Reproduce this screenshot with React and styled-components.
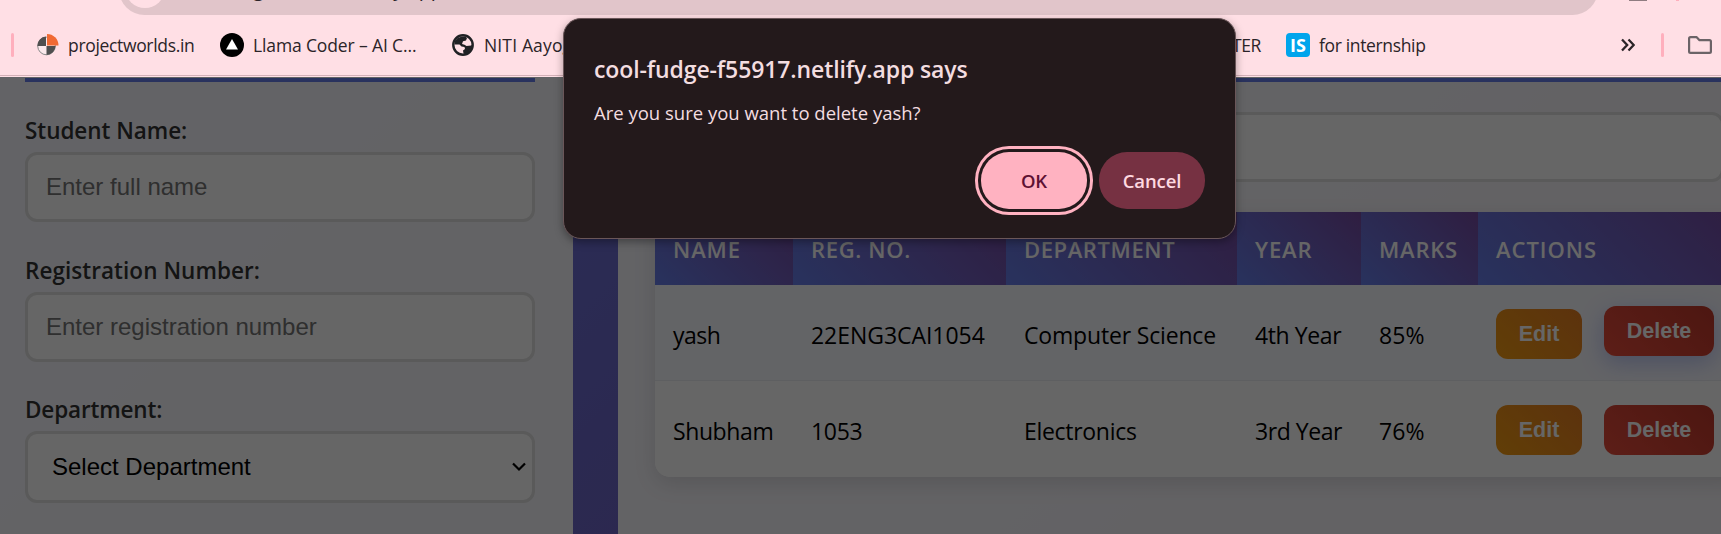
import React from "react";
import styled, { createGlobalStyle } from "styled-components";

const ui = `"Open Sans", "Noto Sans", sans-serif`;
const arial = `"Liberation Sans", Arial, sans-serif`;
const brand = "linear-gradient(45deg, #667eea, #764ba2)";

const Global = createGlobalStyle`
  *, *::before, *::after { box-sizing: border-box; }
  body { margin: 0; overflow: hidden; font-family: ${ui}; }
`;

const Screen = styled.div`
  position: relative;
  display: flex;
  flex-direction: column;
  width: 1721px;
  height: 534px;
  overflow: hidden;
`;

const Chrome = styled.header`
  display: flex;
  flex-direction: column;
  flex: none;
  height: 77px;
  background: #ffdfe5;
  border-bottom: 1px solid #ffdfe5;
  box-shadow: inset 0 -1px 0 #d3b1b8;
`;

const AddressRow = styled.div`
  display: flex;
  align-items: flex-end;
  height: 15px;
  padding-left: 119px;
  overflow: hidden;
`;

const AddressBar = styled.div`
  display: flex;
  flex: none;
  align-items: flex-end;
  width: 1479px;
  height: 51px;
  padding-left: 6px;
  background: #e1c5ca;
  border-radius: 26px;
`;

const SiteInfo = styled.span`
  width: 40px;
  height: 40px;
  margin: 0 14px 7px 0;
  border-radius: 50%;
  background: #ffdfe5;
`;

const Address = styled.span`
  margin-bottom: 13px;
  color: #2b2428;
  font-size: 20px;
  line-height: 26px;
  letter-spacing: -0.3px;
`;

const ToolbarEdge = styled.span`
  align-self: flex-start;
  width: ${(p) => p.$width}px;
  height: 1px;
  margin-left: ${(p) => p.$before}px;
  background: ${(p) => p.$color};
`;

const Bookmarks = styled.nav`
  display: flex;
  align-items: center;
  height: 60px;
  padding-left: 11px;
`;

const Divider = styled.span`
  flex: none;
  width: 3px;
  height: 24px;
  margin-right: ${(p) => p.$after}px;
  border-radius: 2px;
  background: #ffafbd;
`;

const Bookmark = styled.span`
  display: flex;
  flex: none;
  align-items: center;
  gap: ${(p) => p.$gap ?? 9}px;
  width: ${(p) => p.$width}px;
  color: #2b2428;
  font-size: 17.5px;
  line-height: 24px;
  letter-spacing: ${(p) => p.$track}px;
  white-space: nowrap;
  svg { flex: none; }
`;

const Badge = styled.span`
  width: 24px;
  height: 24px;
  border-radius: 4px;
  background: #00a5ec;
  color: #fff;
  font-size: 18px;
  font-weight: 700;
  line-height: 24px;
  letter-spacing: 0;
  text-align: center;
`;

const BarIcon = styled.svg`
  flex: none;
  margin-right: ${(p) => p.$after}px;
`;

const Page = styled.main`
  display: flex;
  height: 457px;
  background: linear-gradient(135deg, #667eea, #764ba2);
`;

const FormPanel = styled.section`
  display: flex;
  flex-direction: column;
  flex: none;
  width: 573px;
  padding: 1px 38px 0 25px;
  background: rgba(255, 255, 255, 0.95);
`;

const Rule = styled.div`
  flex: none;
  height: 4px;
  background: #667eea;
`;

const Field = styled.div`
  display: flex;
  flex-direction: column;
  flex: none;
  height: 139.5px;
`;

const Label = styled.label`
  height: 40px;
  padding-top: 2px;
  color: #333;
  font-size: 22.5px;
  font-weight: 600;
  line-height: 33px;
  letter-spacing: ${(p) => p.$track}px;
`;

const Control = styled.div`
  display: flex;
  align-items: center;
  justify-content: space-between;
  height: ${(p) => (p.$select ? 71.5 : 70)}px;
  padding: ${(p) => (p.$select ? 1 : 0)}px 6px 0 ${(p) => (p.$select ? 24 : 18)}px;
  border: 3px solid #e0e0e0;
  border-radius: 12px;
  background: #fff;
  color: ${(p) => (p.$select ? "#000" : "#757575")};
  font-family: ${arial};
  font-size: 24px;
`;

const Fields = styled.div`
  padding-top: 30px;
`;

const ListPanel = styled.section`
  flex: none;
  width: 1140px;
  margin-left: 45px;
  padding: 1px 0 0 37px;
  background: rgba(255, 255, 255, 0.95);
`;

const Search = styled.div`
  width: 1069px;
  height: 70px;
  margin: 30px 0;
  border: 3px solid #e0e0e0;
  border-radius: 12px;
  background: #fff;
`;

const Table = styled.div`
  width: 1090px;
  overflow: hidden;
  border-radius: 15px;
  background: #fff;
  box-shadow: 0 7px 22px rgba(0, 0, 0, 0.12);
`;

const Row = styled.div`
  display: grid;
  grid-template-columns: 138px 213px 231px 124px 117px 267px;
  grid-template-rows: 100%;
  height: ${(p) => (p.$head ? 73 : 96)}px;
  background: ${(p) => (p.$hover ? "#f8f9ff" : "#fff")};
  border-bottom: ${(p) => (p.$hover ? "1px solid #eceef2" : "none")};
`;

const HeadCell = styled.div`
  padding: 0 18px;
  background: ${brand};
  color: #fff;
  font-size: 22px;
  font-weight: 600;
  line-height: 75px;
  letter-spacing: ${(p) => p.$track}px;
  white-space: nowrap;
`;

const Cell = styled.div`
  display: flex;
  align-items: center;
  gap: 22px;
  padding: 4px 18px 0;
  color: #000;
  font-size: 23px;
  letter-spacing: ${(p) => p.$track}px;
  white-space: nowrap;
`;

const Action = styled.button`
  width: ${(p) => (p.$danger ? 110 : 86)}px;
  height: 50px;
  margin: ${(p) => (p.$raised ? "-8px" : "-2px")} 0 0;
  padding: 1px 0 0;
  border: 0;
  border-radius: 12px;
  background: ${(p) =>
    p.$danger
      ? "linear-gradient(45deg, #e74c3c, #c0392b)"
      : "linear-gradient(45deg, #f39c12, #e67e22)"};
  box-shadow: ${(p) => (p.$raised ? "0 7px 22px rgba(102, 126, 234, 0.4)" : "none")};
  color: #fff;
  font: bold 21.5px ${arial};
`;

const Scrim = styled.div`
  position: absolute;
  inset: 77px 0 0;
  background: rgba(0, 0, 0, 0.6);
`;

const Dialog = styled.div`
  position: absolute;
  left: 563px;
  top: 18px;
  display: flex;
  flex-direction: column;
  width: 673px;
  height: 221px;
  padding: 34px 30px 0 30px;
  border: 1px solid #6a5659;
  border-radius: 18px;
  background: #23191b;
  color: #f3dde0;
  box-shadow: 0 3px 8px rgba(0, 0, 0, 0.35);
`;

const Title = styled.h1`
  margin: 0;
  font-size: 23px;
  font-weight: 600;
  line-height: 32px;
  letter-spacing: -0.1px;
`;

const Message = styled.p`
  margin: 15px 0 0;
  font-size: 18.5px;
  line-height: 26px;
`;

const Buttons = styled.div`
  display: flex;
  justify-content: flex-end;
  gap: 12px;
  margin-top: 26px;
`;

const DialogButton = styled.button`
  width: 106px;
  height: 57px;
  padding: 0;
  border: 0;
  border-radius: 28px;
  background: ${(p) => (p.$primary ? "#ffb2c1" : "#763142")};
  box-shadow: ${(p) => (p.$primary ? "0 0 0 3px #23191b, 0 0 0 6px #ffb2c1" : "none")};
  color: ${(p) => (p.$primary ? "#5e1133" : "#ffd9e0")};
  font: 600 18.5px ${ui};
  letter-spacing: -0.1px;
`;

const columns = [
  ["NAME", 0.9],
  ["REG. NO.", 0.65],
  ["DEPARTMENT", 0.6],
  ["YEAR", 0.9],
  ["MARKS", 0.8],
  ["ACTIONS", 0.95],
];

const rows = [
  [["yash", -0.5], ["22ENG3CAI1054", -0.04], ["Computer Science", -0.17], ["4th Year", -0.4], ["85%", 0.1]],
  [["Shubham", -0.4], ["1053", -0.3], ["Electronics", -0.3], ["3rd Year", -0.45], ["76%", 0.1]],
];

export default function App() {
  return (
    <Screen>
      <Global />
      <Chrome>
        <AddressRow>
          <AddressBar>
            <SiteInfo />
            <Address>cool-fudge-f55917.netlify.app</Address>
          </AddressBar>
          <ToolbarEdge $before={31} $width={18} $color="#8f7c81" />
          <ToolbarEdge $before={29} $width={3} $color="#ffafbd" />
        </AddressRow>
        <Bookmarks>
          <Divider $after={23} />
          <Bookmark $width={183} $track={-0.33}>
            <svg width="22" height="22" viewBox="0 0 22 22">
              <circle cx="9.500" cy="12" r="8.800" fill="#fbe9ec" stroke="#888" />
              <path d="M9 2.500V12H.5A9 9 0 0 1 9 2.500zM9.500 12H18.500a9 9 0 0 1-9 9z" fill="#4f4f4f" />
              <path d="M10 0A11.500 11.500 0 0 1 21.500 11.500H10z" fill="#f16a34" />
            </svg>
            projectworlds.in
          </Bookmark>
          <Bookmark $width={232} $track={-0.13}>
            <svg width="24" height="24" viewBox="0 0 24 24">
              <circle cx="12" cy="12" r="12" />
              <path d="M12 6l6 10.500H6z" fill="#fff" />
            </svg>
            Llama Coder – AI C...
          </Bookmark>
          <Bookmark $width={780} $gap={10} $track={0.15}>
            <svg width="22" height="22" viewBox="0 0 22 22">
              <circle cx="11" cy="11" r="9.700" fill="#ffdfe5" stroke="#202124" strokeWidth="2.400" />
              <path d="M10.500 2.500h3l1.500 1.500-1 2.500-3 .8-1 2.700 2.500.8 2 1.200 4.800-.5 1-1.500-.5 4-3.300 4.500-3 1.500-2-.5-.5-3 2-1.500-.5-2-3-.5-2-2H2.500L3 7l3-3.300z" fill="#202124" />
            </svg>
            NITI Aayog
          </Bookmark>
          <Bookmark $width={54} $track={-0.4}>TER</Bookmark>
          <Bookmark $width={335} $track={-0.35}>
            <Badge>IS</Badge>
            for internship
          </Bookmark>
          <BarIcon $after={26} width="14" height="14" viewBox="0 0 14 14" fill="none" stroke="#2b2428" strokeWidth="2.300">
            <path d="M1 1.500L6.200 7 1 12.500M7.500 1.500L12.700 7l-5.200 5.500" />
          </BarIcon>
          <Divider $after={24} />
          <BarIcon $after={0} width="24" height="18" viewBox="0 0 24 18" fill="none" stroke="#6b6367" strokeWidth="2.200" strokeLinejoin="round">
            <path d="M2.500 1.200h6.200l2.800 3h10q1.400 0 1.400 1.400v9.800q0 1.400-1.400 1.400h-19q-1.400 0-1.400-1.400V2.600q0-1.400 1.400-1.400z" />
          </BarIcon>
        </Bookmarks>
      </Chrome>
      <Page>
        <FormPanel>
          <Rule />
          <Fields>
            <Field><Label $track={-0.05}>Student Name:</Label><Control>Enter full name</Control></Field>
            <Field><Label $track={0.05}>Registration Number:</Label><Control>Enter registration number</Control></Field>
            <Field>
              <Label $track={-0.15}>Department:</Label>
              <Control $select>
                Select Department
                <svg width="14" height="10" viewBox="0 0 14 10" fill="none" stroke="#000" strokeWidth="2.200"><path d="M1 1.500l6 6 6-6" /></svg>
              </Control>
            </Field>
          </Fields>
        </FormPanel>
        <ListPanel>
          <Rule />
          <Search />
          <Table>
            <Row $head>
              {columns.map(([name, track]) => (
                <HeadCell key={name} $track={track}>{name}</HeadCell>
              ))}
            </Row>
            {rows.map((r, i) => (
              <Row key={r[0][0]} $hover={i === 0}>
                {r.map(([text, track]) => <Cell key={text} $track={track}>{text}</Cell>)}
                <Cell>
                  <Action>Edit</Action>
                  <Action $danger $raised={i === 0}>Delete</Action>
                </Cell>
              </Row>
            ))}
          </Table>
        </ListPanel>
      </Page>
      <Scrim />
      <Dialog>
        <Title>cool-fudge-f55917.netlify.app says</Title>
        <Message>Are you sure you want to delete yash?</Message>
        <Buttons>
          <DialogButton $primary>OK</DialogButton>
          <DialogButton>Cancel</DialogButton>
        </Buttons>
      </Dialog>
    </Screen>
  );
}
